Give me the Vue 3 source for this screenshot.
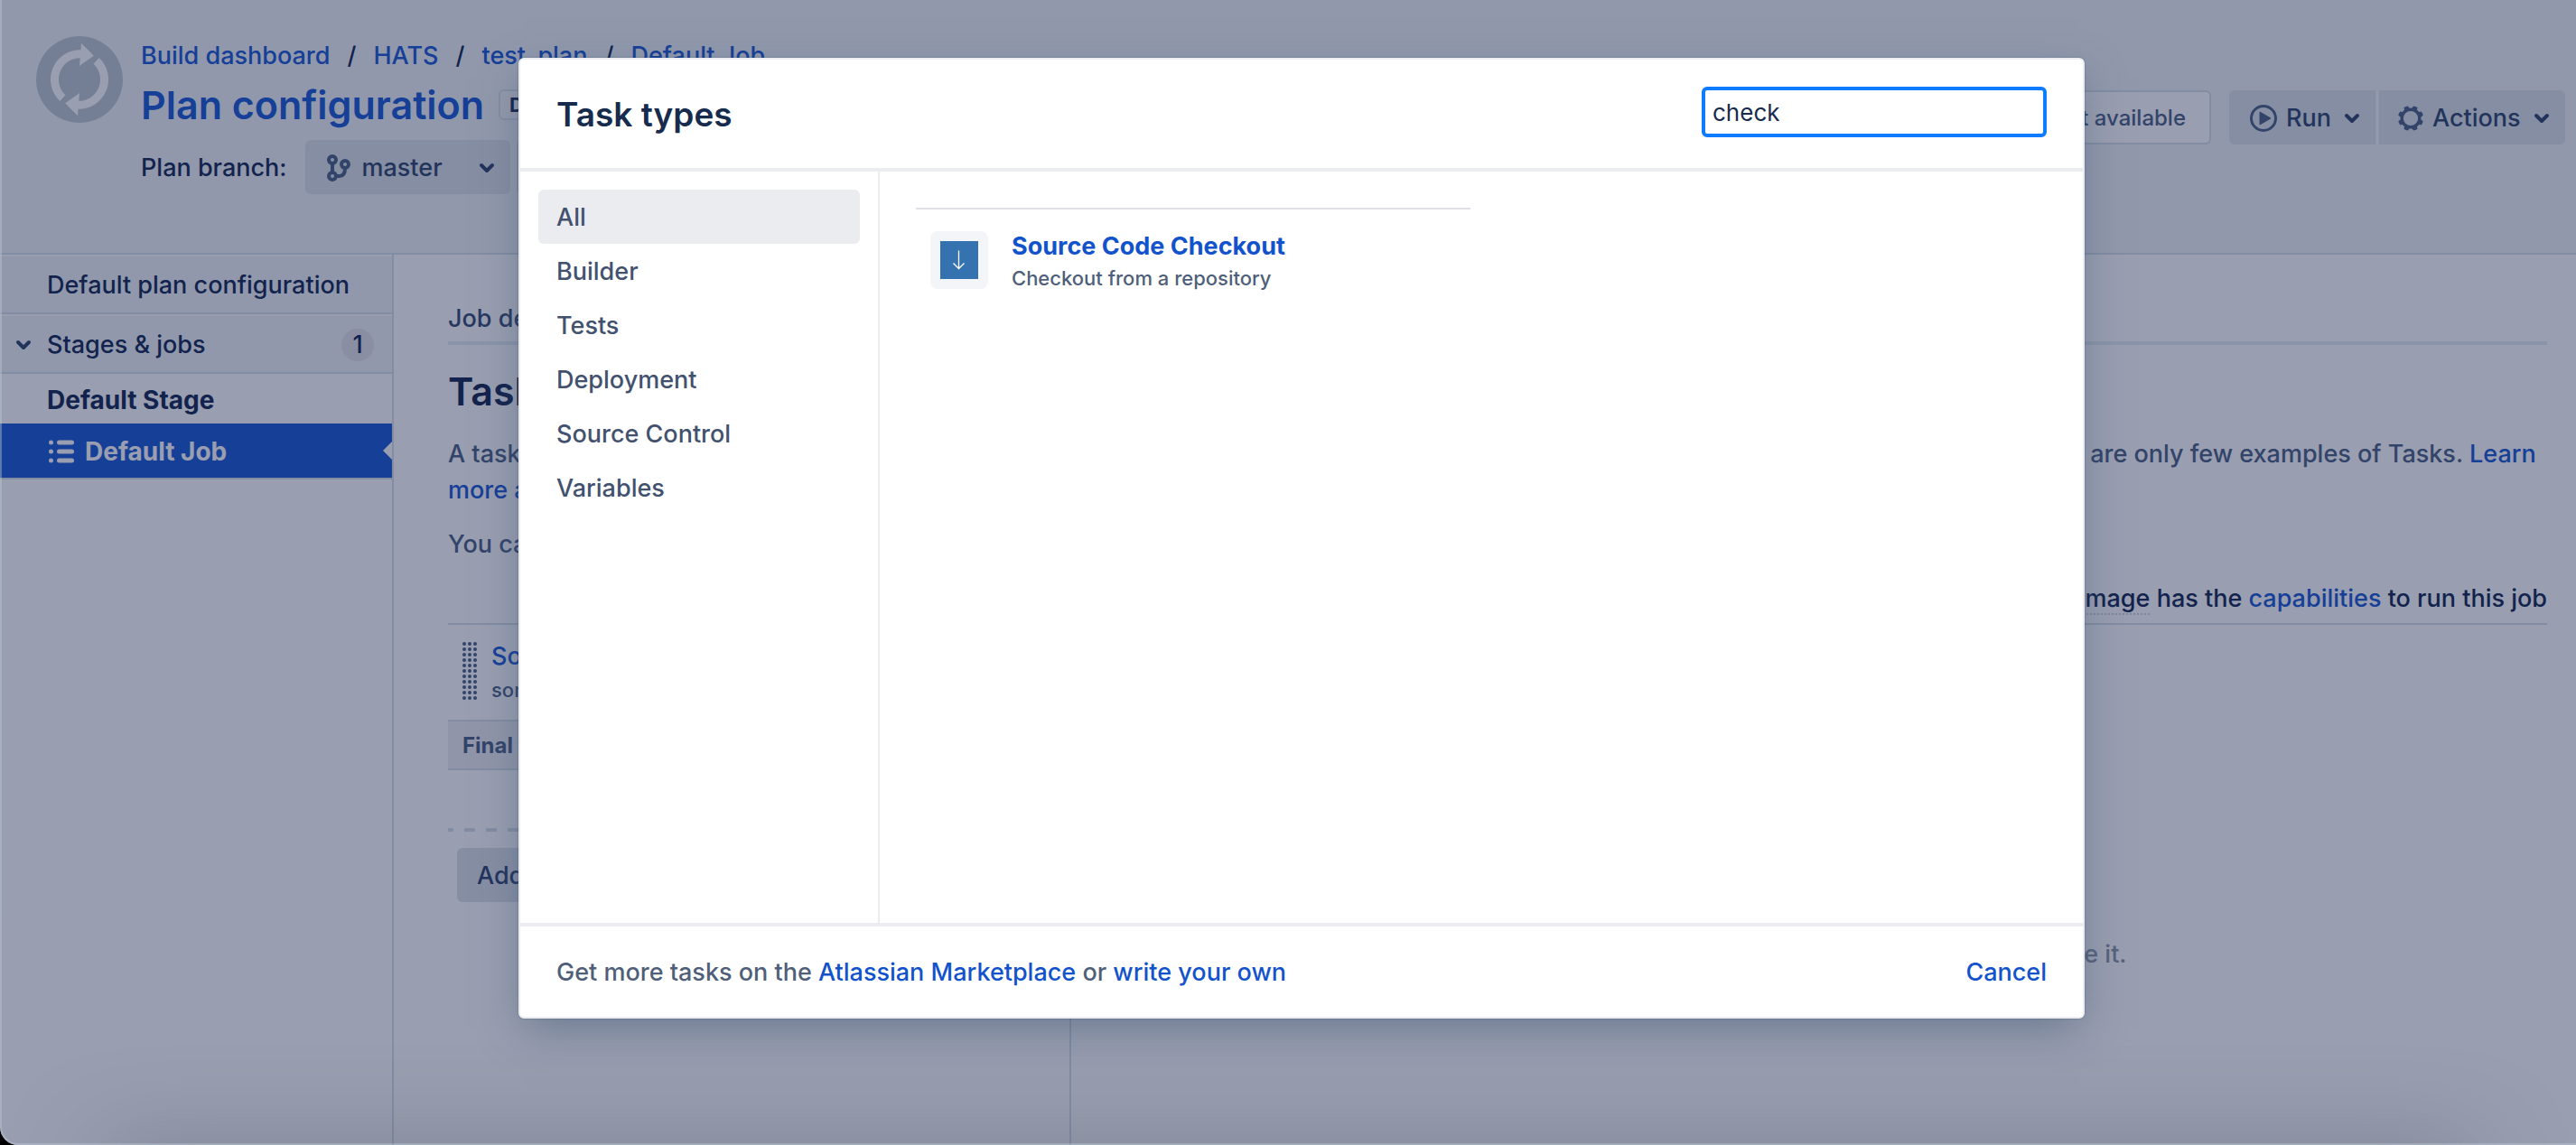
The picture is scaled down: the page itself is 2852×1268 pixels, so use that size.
<script setup>
import { ref } from 'vue'

const query = ref('check')
const categories = ['All', 'Builder', 'Tests', 'Deployment', 'Source Control', 'Variables']
const active = ref('All')
const crumbs = ['Build dashboard', 'HATS', 'test_plan', 'Default Job']
const gripDots = Array.from({ length: 33 }, (_, i) => ({ x: 2 + (i % 3) * 6, y: 2 + Math.floor(i / 3) * 6 }))
const gearTeeth = [0, 45, 90, 135, 180, 225, 270, 315]
</script>

<template>
  <div class="desktop">
    <div class="window">
      <header class="header">
        <svg class="logo" viewBox="0 0 96 96" aria-hidden="true">
          <circle cx="48" cy="48" r="48" fill="#c2cbd4" />
          <g fill="none" stroke="#ffffff" stroke-width="9">
            <path d="M50 19.7A28.3 28.3 0 0 0 29.4 68.6" />
            <path d="M46 76.3A28.3 28.3 0 0 0 66.6 27.4" />
          </g>
          <path fill="#ffffff" d="M50 7.7L63.8 21.8L48 33ZM46 88.3L32.2 74.2L48 63Z" />
        </svg>
        <div class="heading">
          <nav class="crumbs" aria-label="Breadcrumb">
            <template v-for="(c, i) in crumbs" :key="c">
              <span v-if="i" class="slash">/</span><a href="#">{{ c }}</a>
            </template>
          </nav>
          <div class="title-row">
            <h1><a href="#">Plan configuration</a></h1>
            <span class="lozenge">DISABLED</span>
          </div>
          <div class="branch-row">
            <span class="branch-label">Plan branch:</span>
            <button class="btn branch" type="button">
              <svg width="26" height="30" viewBox="0 0 26 30" fill="none" stroke="#56698a" stroke-width="4" aria-hidden="true">
                <circle cx="6" cy="6" r="4" /><circle cx="6" cy="24" r="4" /><circle cx="20" cy="11" r="4" />
                <path d="M6 10V20M10 24H14C18 24 20 21 20 15" />
              </svg>
              <span class="branch-name">master</span>
              <svg width="16" height="10" viewBox="0 0 16 10" class="chev" aria-hidden="true"><path d="M2 2L8 8L14 2" /></svg>
            </button>
            <button class="btn extra" type="button" aria-label="Branch status"></button>
          </div>
        </div>
        <div class="actions">
          <span class="status">Status not available</span>
          <div class="group">
            <button class="btn run" type="button">
              <svg width="30" height="30" viewBox="0 0 30 30" aria-hidden="true">
                <circle cx="15" cy="15" r="13.5" fill="none" stroke="#56698a" stroke-width="3" />
                <path d="M11 8L23 15L11 22Z" fill="#56698a" stroke="#56698a" stroke-linejoin="round" />
              </svg>
              <span>Run</span>
              <svg width="16" height="10" viewBox="0 0 16 10" class="chev" aria-hidden="true"><path d="M2 2L8 8L14 2" /></svg>
            </button>
            <button class="btn more" type="button">
              <svg width="28" height="28" viewBox="0 0 28 28" aria-hidden="true">
                <circle cx="14" cy="14" r="9.8" fill="none" stroke="#56698a" stroke-width="3.4" />
                <path
                  v-for="t in gearTeeth"
                  :key="t"
                  d="M10.8 4.500L11.500 0.300Q14 -0.600 16.500 0.300L17.200 4.500Z"
                  fill="#56698a"
                  :transform="`rotate(${t + 22.5} 14 14)`"
                />
              </svg>
              <span>Actions</span>
              <svg width="16" height="10" viewBox="0 0 16 10" class="chev" aria-hidden="true"><path d="M2 2L8 8L14 2" /></svg>
            </button>
          </div>
        </div>
      </header>

      <div class="content">
        <aside class="side">
          <a class="side-row" href="#">Default plan configuration</a>
          <a class="side-row" href="#">
            <svg class="side-chev chev" width="16" height="10" viewBox="0 0 16 10" aria-hidden="true"><path d="M2 2L8 8L14 2" /></svg>
            Stages &amp; jobs
            <span class="count">1</span>
          </a>
          <div class="stage">Default Stage</div>
          <a class="job" href="#">
            <svg width="28" height="26" viewBox="0 0 28 26" fill="#ffffff" aria-hidden="true">
              <circle cx="2.500" cy="3" r="2.500" /><circle cx="2.500" cy="13" r="2.500" /><circle cx="2.500" cy="23" r="2.500" />
              <rect x="9" y="0.500" width="19" height="5" rx="2.500" />
              <rect x="9" y="10.500" width="19" height="5" rx="2.500" />
              <rect x="9" y="20.500" width="19" height="5" rx="2.500" />
            </svg>
            Default Job
          </a>
        </aside>

        <main class="main">
          <div class="tabs"><a href="#">Job details</a></div>
          <h2>Tasks</h2>
          <p class="intro">
            A task is a piece of work that is being executed as part of the build. The execution of a script, a shell
            command, an Ant Task or a Maven goal, are only few examples of Tasks. <a href="#">Learn more about tasks</a>
          </p>
          <p class="intro">You can use runtime variables</p>
          <p class="caps">
            <span class="dotted">image</span> has the <a href="#">capabilities</a> to run this job
          </p>
          <div class="panels">
            <section class="tasks">
              <div class="task">
                <svg width="16" height="66" viewBox="0 0 16 66" fill="#56698a" aria-hidden="true">
                  <circle v-for="d in gripDots" :key="`${d.x}-${d.y}`" :cx="d.x" :cy="d.y" r="2" />
                </svg>
                <div>
                  <a href="#" class="task-name">Source</a>
                  <div class="task-note">some</div>
                </div>
              </div>
              <div class="final">Final tasks</div>
              <div class="dashes"></div>
              <button class="btn add" type="button">Add task</button>
            </section>
            <section class="detail">Select a task from the list on the left to configure it.</section>
          </div>
        </main>
      </div>

      <div class="blanket"></div>
      <div class="below"></div>
      <div class="edge"></div>

      <div class="layer">
        <div class="dialog" role="dialog" aria-labelledby="dialog-title">
          <div class="dialog-head">
            <h2 id="dialog-title">Task types</h2>
            <input v-model="query" type="text" aria-label="Search task types" />
          </div>
          <div class="dialog-body">
            <nav class="cats" aria-label="Task categories">
              <button
                v-for="c in categories"
                :key="c"
                type="button"
                class="cat"
                :class="{ selected: c === active }"
                @click="active = c"
              >{{ c }}</button>
            </nav>
            <div class="results">
              <div class="result">
                <div class="result-icon">
                  <svg width="42" height="42" viewBox="0 0 42 42" aria-hidden="true">
                    <rect width="42" height="42" fill="#3572b0" />
                    <path d="M20.500 10.500V30M14.500 24.500L20.500 30.500L26.500 24.500" fill="none" stroke="#ffffff" stroke-width="1.300" />
                  </svg>
                </div>
                <div>
                  <a href="#" class="result-name">Source Code Checkout</a>
                  <div class="result-note">Checkout from a repository</div>
                </div>
              </div>
            </div>
          </div>
          <div class="dialog-foot">
            <p>Get more tasks on the <a href="#">Atlassian Marketplace</a> or <a href="#">write your own</a></p>
            <button type="button" class="cancel">Cancel</button>
          </div>
        </div>
      </div>
    </div>
  </div>
</template>

<style>
body {
  margin: 0;
  background: #000000;
}
</style>

<style scoped>
.desktop {
  background: #000000;
  font-family: Inter, "Noto Sans", sans-serif;
  font-size: 27px;
  font-weight: 500;
  line-height: 40px;
  color: #20335a;
}
.desktop * {
  box-sizing: border-box;
}
.window {
  position: relative;
  display: flex;
  flex-direction: column;
  min-height: 100vh;
  overflow: hidden;
  border-bottom-left-radius: 20px;
  background: #ffffff;
}
h1,
h2,
p {
  margin: 0;
}
a {
  color: #2661d5;
  text-decoration: none;
}
button,
input {
  font: inherit;
}
.btn {
  display: flex;
  align-items: center;
  height: 60px;
  padding-top: 2px;
  border: 0;
  border-radius: 6px;
  background: #e0e5e9;
  color: #3a4f74;
}
.chev {
  overflow: visible;
  fill: none;
  stroke: #3a4f74;
  stroke-width: 4;
  stroke-linecap: round;
  stroke-linejoin: round;
}

/* page header */
.header {
  display: flex;
  align-items: flex-start;
  min-height: 282px;
  padding: 40px 12px 0 40px;
  border-bottom: 2px solid #d9e1e8;
  background: #f2f6f9;
}
.logo {
  width: 96px;
  height: 96px;
  margin-right: 20px;
}
.crumbs {
  display: flex;
  padding-top: 2px;
  white-space: nowrap;
}
.slash {
  margin: 0 19px;
}
.title-row {
  display: flex;
  align-items: center;
  gap: 16px;
  margin-top: 6px;
}
.title-row h1 {
  font-size: 43px;
  line-height: 56px;
  font-weight: 600;
  white-space: nowrap;
}
.lozenge {
  padding: 0 10px;
  border: 2px solid #dde4ea;
  border-radius: 6px;
  background: #f7f9fb;
  font-size: 22px;
  line-height: 30px;
  font-weight: 700;
}
.branch-row {
  display: flex;
  align-items: center;
  margin-top: 11px;
}
.branch-label {
  padding-top: 2px;
}
.branch {
  width: 227px;
  margin-left: 20px;
  padding: 2px 18px 0 24px;
}
.branch-name {
  flex: 1;
  margin-left: 13px;
  text-align: left;
}
.extra {
  width: 60px;
  margin-left: 7px;
}
.actions {
  display: flex;
  gap: 20px;
  margin: 60px 0 0 auto;
}
.status {
  height: 60px;
  padding: 2px 26px 0;
  border: 2px solid #d9e1e8;
  border-radius: 6px;
  background: #ffffff;
  font-size: 24px;
  line-height: 54px;
  color: #56698a;
}
.group {
  display: flex;
  gap: 4px;
}
.run {
  width: 162px;
  padding: 2px 18px 0 23px;
  border-radius: 6px 0 0 6px;
}
.more {
  width: 206px;
  padding: 2px 18px 0 21px;
  border-radius: 0 6px 6px 0;
}
.run span,
.more span {
  flex: 1;
  margin-left: 10px;
  text-align: left;
}

/* left column */
.content {
  display: flex;
  flex: 1;
}
.side {
  flex: none;
  width: 436px;
  border-right: 2px solid #d9e1e8;
}
.side-row {
  position: relative;
  display: flex;
  align-items: center;
  height: 66px;
  padding: 4px 20px 0 52px;
  border-bottom: 2px solid #d9e1e8;
  background: #f2f6f9;
  box-shadow: inset 0 2px 0 #ffffff;
  color: #20335a;
}
.side-chev {
  position: absolute;
  left: 18px;
}
.count {
  width: 36px;
  height: 36px;
  margin-left: auto;
  border-radius: 50%;
  background: #e4e5ea;
  line-height: 36px;
  text-align: center;
}
.stage {
  padding: 9px 0 6px 52px;
  font-size: 28px;
  font-weight: 700;
}
.job {
  position: relative;
  display: flex;
  align-items: center;
  gap: 12px;
  height: 62px;
  padding: 2px 0 0 54px;
  border-bottom: 2px solid #d9e1e8;
  background: #2661d5;
  background-clip: padding-box;
  font-size: 28px;
  font-weight: 700;
  color: #ffffff;
}
.job::after {
  content: "";
  position: absolute;
  top: 20px;
  right: 0;
  border: 10px solid transparent;
  border-left-width: 0;
  border-right-color: #ffffff;
}

/* main column */
.main {
  display: flex;
  flex: 1;
  flex-direction: column;
  padding: 51px 32px 0 60px;
}
.tabs {
  padding-bottom: 5px;
  border-bottom: 4px solid #e6eef2;
}
.tabs a {
  color: #42557a;
}
.main h2 {
  margin: 23px 0 22px;
  font-size: 43px;
  line-height: 56px;
  font-weight: 600;
}
.intro {
  margin-bottom: 20px;
  color: #56698a;
}
.caps {
  padding-bottom: 7px;
  text-align: right;
}
.dotted {
  border-bottom: 2px dotted #d0d8e0;
}
.panels {
  display: flex;
  flex: 1;
  border-top: 2px solid #d9e1e8;
}
.tasks {
  flex: none;
  width: 690px;
  border-right: 2px solid #d9e1e8;
}
.task {
  display: flex;
  gap: 16px;
  align-items: center;
  padding: 15px 16px 16px;
  border-bottom: 2px solid #d9e1e8;
}
.task-name {
  display: block;
}
.task-note {
  font-size: 22px;
  line-height: 34px;
  color: #56698a;
}
.final {
  padding: 2px 0 0 16px;
  border-bottom: 2px solid #d9e1e8;
  background: #f0f1f4;
  font-size: 24px;
  line-height: 50px;
  font-weight: 700;
  color: #56698a;
}
.dashes {
  height: 4px;
  margin: 64px 0 18px;
  background: repeating-linear-gradient(90deg, #d9e1e8 0 6px, transparent 6px 18px, #d9e1e8 18px 24px);
}
.add {
  margin-left: 10px;
  padding: 2px 22px 0;
}
.detail {
  flex: 1;
  padding: 345px 0 0 46px;
  text-align: center;
  color: #929ba8;
}

/* layers above the page */
.blanket,
.edge,
.layer {
  position: absolute;
  inset: 0;
}
.blanket {
  background: rgba(0, 12, 58, 0.4);
}
.below {
  position: absolute;
  right: 130px;
  bottom: -60px;
  left: 130px;
  height: 40px;
  box-shadow: 0 0 100px 10px rgba(80, 88, 100, 0.5);
}
.edge {
  border: solid rgba(190, 208, 214, 0.4);
  border-width: 0 0 2px 2px;
  border-bottom-left-radius: 20px;
}
.layer {
  display: flex;
  padding: 64px 544px 140px 574px;
}
.dialog {
  display: flex;
  flex: 1;
  flex-direction: column;
  border: 2px solid #ebecf0;
  border-radius: 6px;
  background: #ffffff;
  box-shadow: 0 0 2px rgba(9, 60, 90, 0.4), 0 16px 44px -6px rgba(60, 84, 112, 0.5);
}
.dialog a,
.cancel {
  color: #1253cc;
}
.dialog-head {
  display: flex;
  align-items: flex-start;
  justify-content: space-between;
  height: 124px;
  padding: 30px 40px 0;
  border-bottom: 4px solid #ebecf0;
}
.dialog-head h2 {
  font-size: 37px;
  line-height: 62px;
  font-weight: 600;
  color: #172b4d;
}
.dialog-head input {
  width: 382px;
  height: 56px;
  padding: 0 8px;
  border: 4px solid #0f7bff;
  border-radius: 6px;
  outline: none;
  background: #ffffff;
  font-size: 26px;
  font-weight: 400;
  color: #172b4d;
}
.dialog-body {
  display: flex;
  flex: 1;
}
.cats {
  flex: none;
  width: 398px;
  padding: 20px;
  border-right: 2px solid #ebecf0;
}
.cat {
  display: block;
  width: 356px;
  height: 60px;
  padding: 2px 20px 0;
  border: 0;
  border-radius: 6px;
  background: none;
  text-align: left;
  color: #42526e;
}
.cat.selected {
  background: #ebecf0;
}
.results {
  padding: 40px;
}
.result {
  display: flex;
  gap: 26px;
  width: 614px;
  padding: 21px 16px;
  border-top: 2px solid #dfe1e6;
}
.result-icon {
  display: flex;
  align-items: center;
  justify-content: center;
  width: 64px;
  height: 64px;
  margin-top: 3px;
  border-radius: 8px;
  background: #f4f5f9;
}
.result-name {
  display: block;
  font-weight: 700;
}
.result-note {
  font-size: 22px;
  line-height: 30px;
  color: #505f79;
}
.dialog-foot {
  display: flex;
  align-items: center;
  justify-content: space-between;
  height: 104px;
  padding: 2px 40px 0;
  border-top: 4px solid #ebecf0;
  color: #505f79;
}
.cancel {
  padding: 0;
  border: 0;
  background: none;
}
</style>
